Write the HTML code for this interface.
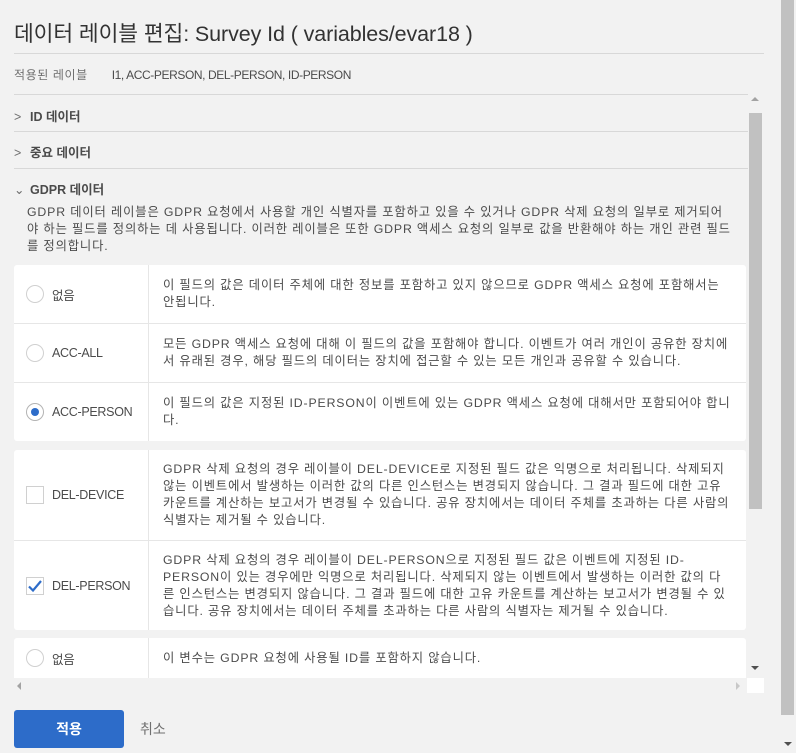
<!DOCTYPE html>
<html><head><meta charset="utf-8"><style>
*{box-sizing:border-box;margin:0;padding:0}
body{width:796px;height:753px;background:#f2f2f2;font-family:"Liberation Sans","Noto Sans CJK KR",sans-serif;color:#4b4b4b;position:relative;overflow:hidden;font-size:12.5px}
.title{position:absolute;left:14px;top:17px;font-size:21.5px;color:#323232;white-space:nowrap;letter-spacing:-0.1px}
.hr{position:absolute;left:14px;width:750px;height:1px;background:#d8d8d8}
.lbl{position:absolute;left:14px;top:66px;font-size:12px;color:#6e6e6e;letter-spacing:0.6px}
.lbl b{font-weight:normal;color:#4b4b4b;margin-left:20px;letter-spacing:-0.4px}
.acc{position:absolute;left:14px;font-size:12.5px;font-weight:bold;color:#4b4b4b}
.acc i{font-style:normal;display:inline-block;width:16px;color:#6e6e6e;font-weight:normal}
.desc{position:absolute;left:27px;top:204px;width:705px;line-height:17px;font-size:12.3px;color:#4b4b4b;letter-spacing:0.85px}
.panel{position:absolute;left:14px;width:732px;background:#fff;border-radius:3px;overflow:hidden}
.row{position:absolute;left:0;width:732px;border-top:1px solid #e6e6e6}
.row:first-child{border-top:none}
.lc{position:absolute;left:0;top:0;bottom:0;width:135px;border-right:1px solid #e6e6e6;display:flex;align-items:center;padding-left:12px;font-size:12.5px;color:#4b4b4b;letter-spacing:-0.3px}
.rc{position:absolute;left:149px;top:0;bottom:0;right:14px;display:flex;align-items:center;line-height:17px;font-size:12.3px;letter-spacing:0.85px}
.rc span{display:block}
.radio{width:18px;height:18px;border:1.5px solid #d0d0d0;border-radius:50%;margin-right:8px;position:relative;flex:none}
.radio.on{border-color:#b3b3b3}
.radio.on:after{content:"";position:absolute;left:3.5px;top:3.5px;width:8px;height:8px;border-radius:50%;background:#2d6cc9}
.cb{width:18px;height:18px;border:1.5px solid #d0d0d0;margin-right:8px;flex:none;position:relative}
.btn{position:absolute;left:14px;top:710px;width:110px;height:38px;background:#2d6cc9;border-radius:3px;color:#fff;font-weight:bold;font-size:14px;text-align:center;line-height:38px}
.cancel{position:absolute;left:140px;top:719px;font-size:14px;color:#707070}
</style></head><body>
<div class="title">데이터 레이블 편집: Survey Id ( variables/evar18 )</div>
<div class="hr" style="top:53px"></div>
<div class="lbl">적용된 레이블 <b>I1, ACC-PERSON, DEL-PERSON, ID-PERSON</b></div>
<div class="hr" style="top:94px;width:734px"></div>
<div class="acc" style="top:106px"><i>&gt;</i>ID 데이터</div>
<div class="hr" style="top:131px;width:734px"></div>
<div class="acc" style="top:142px"><i>&gt;</i>중요 데이터</div>
<div class="hr" style="top:168px;width:734px"></div>
<div class="acc" style="top:179px"><i>&#8964;</i>GDPR 데이터</div>
<div class="desc">GDPR 데이터 레이블은 GDPR 요청에서 사용할 개인 식별자를 포함하고 있을 수 있거나 GDPR 삭제 요청의 일부로 제거되어야 하는 필드를 정의하는 데 사용됩니다. 이러한 레이블은 또한 GDPR 액세스 요청의 일부로 값을 반환해야 하는 개인 관련 필드를 정의합니다.</div>

<div class="panel" style="top:265px;height:176px">
 <div class="row" style="top:0;height:58px"><div class="lc"><div class="radio"></div>없음</div><div class="rc"><span>이 필드의 값은 데이터 주체에 대한 정보를 포함하고 있지 않으므로 GDPR 액세스 요청에 포함해서는 안됩니다.</span></div></div>
 <div class="row" style="top:58px;height:59px"><div class="lc"><div class="radio"></div>ACC-ALL</div><div class="rc"><span>모든 GDPR 액세스 요청에 대해 이 필드의 값을 포함해야 합니다. 이벤트가 여러 개인이 공유한 장치에서 유래된 경우, 해당 필드의 데이터는 장치에 접근할 수 있는 모든 개인과 공유할 수 있습니다.</span></div></div>
 <div class="row" style="top:117px;height:59px"><div class="lc"><div class="radio on"></div>ACC-PERSON</div><div class="rc"><span>이 필드의 값은 지정된 ID-PERSON이 이벤트에 있는 GDPR 액세스 요청에 대해서만 포함되어야 합니다.</span></div></div>
</div>

<div class="panel" style="top:450px;height:180px">
 <div class="row" style="top:0;height:90px"><div class="lc"><div class="cb"></div>DEL-DEVICE</div><div class="rc"><span>GDPR 삭제 요청의 경우 레이블이 DEL-DEVICE로 지정된 필드 값은 익명으로 처리됩니다. 삭제되지 않는 이벤트에서 발생하는 이러한 값의 다른 인스턴스는 변경되지 않습니다. 그 결과 필드에 대한 고유 카운트를 계산하는 보고서가 변경될 수 있습니다. 공유 장치에서는 데이터 주체를 초과하는 다른 사람의 식별자는 제거될 수 있습니다.</span></div></div>
 <div class="row" style="top:90px;height:90px"><div class="lc"><div class="cb"><svg width="16" height="16" viewBox="0 0 16 16" style="position:absolute;left:0;top:0"><path d="M2 8.5 L6 12.5 L14 3" fill="none" stroke="#2d6cc9" stroke-width="2.2"/></svg></div>DEL-PERSON</div><div class="rc"><span>GDPR 삭제 요청의 경우 레이블이 DEL-PERSON으로 지정된 필드 값은 이벤트에 지정된 ID-PERSON이 있는 경우에만 익명으로 처리됩니다. 삭제되지 않는 이벤트에서 발생하는 이러한 값의 다른 인스턴스는 변경되지 않습니다. 그 결과 필드에 대한 고유 카운트를 계산하는 보고서가 변경될 수 있습니다. 공유 장치에서는 데이터 주체를 초과하는 다른 사람의 식별자는 제거될 수 있습니다.</span></div></div>
</div>

<div class="panel" style="top:638px;height:40px;border-radius:3px 3px 0 0">
 <div class="row" style="top:0;height:40px;"><div class="lc" style="top:0;height:40px;bottom:auto"><div class="radio"></div>없음</div><div class="rc" style="height:40px"><span>이 변수는 GDPR 요청에 사용될 ID를 포함하지 않습니다.</span></div></div>
</div>

<div style="position:absolute;left:749px;top:113px;width:14px;height:556px;background:#f2f2f2"></div>
<div style="position:absolute;left:749px;top:113px;width:13px;height:396px;background:#c1c1c1"></div>
<div style="position:absolute;left:751px;top:97px;width:0;height:0;border-left:4px solid transparent;border-right:4px solid transparent;border-bottom:4px solid #a3a3a3"></div>
<div style="position:absolute;left:751px;top:666px;width:0;height:0;border-left:4px solid transparent;border-right:4px solid transparent;border-top:4px solid #505050"></div>
<div style="position:absolute;left:17px;top:682px;width:0;height:0;border-top:4px solid transparent;border-bottom:4px solid transparent;border-right:4px solid #a3a3a3"></div>
<div style="position:absolute;left:736px;top:682px;width:0;height:0;border-top:4px solid transparent;border-bottom:4px solid transparent;border-left:4px solid #c8c8c8"></div>
<div style="position:absolute;left:747px;top:678px;width:17px;height:15px;background:#fff"></div>
<div style="position:absolute;left:781px;top:0;width:13px;height:715px;background:#c1c1c1"></div>
<div style="position:absolute;left:784px;top:742px;width:0;height:0;border-left:4px solid transparent;border-right:4px solid transparent;border-top:4px solid #505050"></div>

<div class="btn">적용</div>
<div class="cancel">취소</div>
</body></html>
